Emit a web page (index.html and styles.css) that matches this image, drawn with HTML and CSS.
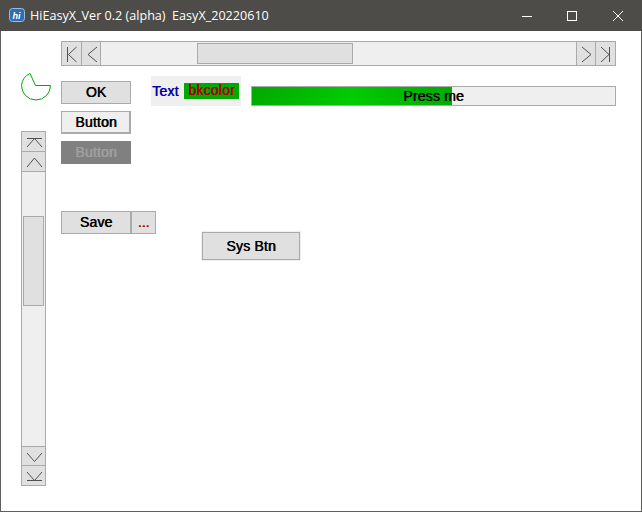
FILE: index.html
```html
<!DOCTYPE html>
<html lang="en">
<head>
<meta charset="utf-8">
<title>HiEasyX</title>
<link rel="stylesheet" href="styles.css">
</head>
<body>
<div class="window">
  <header class="titlebar">
    <svg class="app-icon" width="16" height="16" viewBox="0 0 16 16">
      <rect x="0.5" y="1.5" width="15" height="13" rx="3" fill="#2f6db0" stroke="#8fc0ea"/>
      <text x="7.500" y="11.500" text-anchor="middle" class="app-icon-text">hi</text>
    </svg>
    <span class="title">HiEasyX_Ver 0.2 (alpha)&nbsp; EasyX_20220610</span>
    <div class="caption">
      <svg width="46" height="30" viewBox="0 0 46 30" class="cap"><path d="M18 15.5h10" stroke="#fff" fill="none"/></svg>
      <svg width="46" height="30" viewBox="0 0 46 30" class="cap"><rect x="17.500" y="10.500" width="9" height="9" stroke="#fff" fill="none"/></svg>
      <svg width="46" height="30" viewBox="0 0 46 30" class="cap"><path d="M17 10l10 10M27 10l-10 10" stroke="#fff" fill="none"/></svg>
    </div>
  </header>
  <main class="client">
    <div class="hscroll">
      <button class="sb-btn"><svg width="18" height="23" viewBox="0 0 18 23"><path class="ico" d="M5.500 5v15M14.500 5l-8 7.500 8 7.500"/></svg></button>
      <button class="sb-btn"><svg width="18" height="23" viewBox="0 0 18 23"><path class="ico" d="M15 5l-9 7.500 9 7.500"/></svg></button>
      <div class="h-track"><div class="h-thumb"></div></div>
      <button class="sb-btn"><svg width="18" height="23" viewBox="0 0 18 23"><path class="ico" d="M5 5l9 7.500-9 7.500"/></svg></button>
      <button class="sb-btn"><svg width="18" height="23" viewBox="0 0 18 23"><path class="ico" d="M13.500 5v15M5 5l8 7.500-8 7.500"/></svg></button>
    </div>
    <div class="main">
      <aside class="side">
        <svg class="pie" width="32" height="32" viewBox="0 0 32 32"><path d="M14.500 15.500H29.500A14.500 14.500 0 0 1 0.500 15.500A14.500 14.500 0 0 1 9 3.500Z" fill="none" stroke="#00aa00"/></svg>
        <div class="vscroll">
          <button class="sb-btn-v"><svg width="23" height="18" viewBox="0 0 23 18"><path class="ico" d="M5 5.500h15M5 14l7.500-8.500L20 14"/></svg></button>
          <button class="sb-btn-v"><svg width="23" height="18" viewBox="0 0 23 18"><path class="ico" d="M5 14l7.500-9L20 14"/></svg></button>
          <div class="v-track"><div class="v-thumb"></div></div>
          <button class="sb-btn-v"><svg width="23" height="18" viewBox="0 0 23 18"><path class="ico" d="M5 6l7.500 8.500L20 6"/></svg></button>
          <button class="sb-btn-v"><svg width="23" height="18" viewBox="0 0 23 18"><path class="ico" d="M5 5l7.500 8.500L20 5M5 13.500h15"/></svg></button>
        </div>
      </aside>
      <section class="controls">
        <div class="top-row">
          <div class="btn-col">
            <button class="btn">OK</button>
            <button class="btn btn-focus">Button</button>
            <button class="btn btn-disabled">Button</button>
          </div>
          <div class="text-panel"><span class="txt-blue">Text</span><span class="txt-bk">bkcolor</span></div>
          <div class="progress"><div class="progress-fill"></div><span class="progress-label">Press me</span></div>
        </div>
        <div class="save-row">
          <div class="save-group">
            <button class="btn">Save</button>
            <button class="btn btn-more">...</button>
          </div>
          <button class="btn btn-sys">Sys Btn</button>
        </div>
      </section>
    </div>
  </main>
</div>
</body>
</html>
```
FILE: styles.css
```css
* { box-sizing: border-box; }
html, body { margin: 0; padding: 0; background: #fff; }
body { width: 642px; height: 512px; overflow: hidden; }
.window {
  width: 642px; height: 512px;
  display: flex; flex-direction: column;
  border: 1px solid #5f5f5d; border-top: 0;
  background: #fff;
  font-family: "Liberation Sans", Arial, sans-serif;
}
.titlebar {
  height: 31px; flex: none;
  margin: 0 -1px;
  background: #4d4c48;
  display: flex; align-items: center;
  padding-left: 9px;
  color: #fff;
}
.app-icon { flex: none; margin-top: -1px; }
.app-icon-text { font: italic bold 9px "Liberation Sans", sans-serif; fill: #fff; }
.title {
  margin-left: 5px; margin-top: -1px;
  font: 12.6px "Open Sans", "Noto Sans", sans-serif;
  white-space: nowrap;
}
.caption { margin-left: auto; display: flex; }
.cap { display: block; }
.client { flex: 1; padding: 10px 25px 0 20px; }
.ico { fill: none; stroke: #505050; stroke-width: 1; }
button { font-family: inherit; margin: 0; padding: 0; }
.hscroll {
  margin-left: 40px; height: 25px;
  display: flex;
  border: 1px solid #aaa;
  background: #efefef;
}
.sb-btn {
  width: 20px; height: 23px; flex: none;
  border: 0; background: #e0e0e0;
  display: block;
}
.sb-btn svg, .sb-btn-v svg { display: block; }
.sb-btn:nth-child(1) { width: 19px; }
.sb-btn:nth-child(2) { border-right: 1px solid #aaa; border-left: 1px solid #aaa; }
.sb-btn:nth-child(4) { border-left: 1px solid #aaa; border-right: 1px solid #aaa; }
.sb-btn:nth-child(5) { width: 19px; }
.h-track { flex: 1; padding: 1px 0 1px 96px; }
.h-thumb { width: 156px; height: 21px; background: #e0e0e0; border: 1px solid #aaa; }
.main { display: flex; align-items: flex-start; }
.side { width: 25px; flex: none; padding-top: 4px; }
.pie { display: block; }
.vscroll {
  margin-top: 29px; width: 25px; height: 355px;
  display: flex; flex-direction: column;
  border: 1px solid #aaa; background: #efefef;
}
.sb-btn-v {
  width: 23px; height: 20px; flex: none;
  border: 0; background: #e0e0e0;
}
.sb-btn-v:nth-child(1), .sb-btn-v:nth-child(2) { height: 20px; border-bottom: 1px solid #aaa; }
.sb-btn-v:nth-child(4) { border-top: 1px solid #aaa; border-bottom: 1px solid #aaa; }
.sb-btn-v:nth-child(5) { height: 19px; }
.v-track { flex: 1; padding: 44px 1px 0; }
.v-thumb { width: 21px; height: 90px; background: #e0e0e0; border: 1px solid #aaa; }
.controls { margin-left: 15px; padding-top: 10px; flex: 1; }
.top-row { display: flex; align-items: flex-start; }
.btn-col { width: 70px; flex: none; margin-top: 5px; display: flex; flex-direction: column; gap: 7px; }
.btn {
  width: 70px; height: 23px;
  border: 1px solid #aaa;
  background: #e0e0e0;
  color: #000;
  display: block;
  padding-bottom: 1px;
}
.btn, .text-panel, .progress-label {
  font-size: 14px; font-weight: normal;
  text-shadow: 0.6px 0 0 currentColor;
  letter-spacing: 0.2px;
}
.btn-focus { background: #efefef; box-shadow: inset -1px -1px 0 #aaa; }
.btn-disabled { background: #808080; border-color: #808080; color: #a0a0a0; }
.text-panel {
  margin-left: 20px; width: 90px; height: 30px; flex: none;
  background: #efefef;
  display: flex; align-items: center;
  padding-left: 1px;
  white-space: nowrap;
}
.txt-blue { color: #0000aa; width: 32px; }
.txt-bk {
  width: 55px; height: 16px; line-height: 15px;
  background: #00aa00; color: #aa0000;
  text-align: center;
}
.progress {
  margin-left: 10px; margin-top: 10px;
  width: 365px; height: 20px; flex: none;
  border: 1px solid #aaa; background: #efefef;
  display: flex; align-items: center; justify-content: center;
  position: relative;
}
.progress-fill {
  position: absolute; left: 0; top: 0; bottom: 0; width: 200px;
  background: linear-gradient(90deg, #00aa00, #00cc00 50%, #00aa00);
}
.progress-label { position: relative; color: #000; }
.save-row { display: flex; align-items: flex-start; margin-top: 47px; }
.save-group { display: flex; width: 95px; flex: none; }
.save-group .btn { flex: none; }
.btn-more { width: 25px; color: #aa0000; letter-spacing: 0; }
.btn-sys {
  width: 98px; height: 28px;
  margin-left: 46px; margin-top: 21px;
  box-shadow: 0 0 0 1px #efefef;
}
```
